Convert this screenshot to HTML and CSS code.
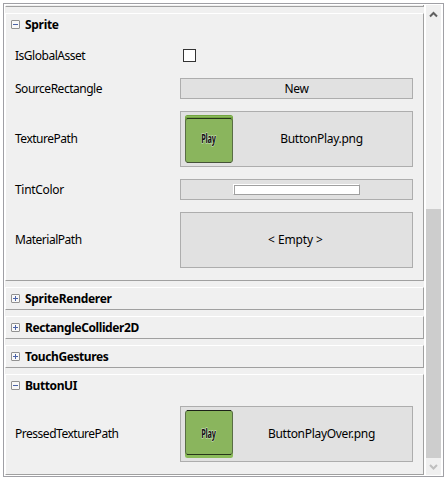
FILE: index.html
```html
<!DOCTYPE html>
<html lang="en">
<head>
<meta charset="utf-8">
<title>Inspector</title>
<link rel="stylesheet" href="styles.css">
</head>
<body>
<div class="frame">
  <main class="content">
    <div class="edge"></div>
    <section class="panel sprite">
      <header><i class="toggle"></i><b class="short">Sprite</b></header>
      <div class="row check-row"><label>IsGlobalAsset</label><span class="checkbox"></span></div>
      <div class="row"><label>SourceRectangle</label><div class="button">New</div></div>
      <div class="row tall"><label>TexturePath</label><div class="button picture">
        <svg width="48" height="48" viewBox="0 0 48 48"><rect width="48" height="46" rx="2.5" fill="#72a63f"/><path d="M1 1.5H47" stroke="#8db75f"/><rect x=".5" y="3.5" width="47" height="44" rx="2.5" fill="#8ab55d" stroke="#596d45"/><path d="M2 3.5H46" stroke="#27351a"/><path d="M2 47.5H46" stroke="#455238"/><text x="23.5" y="28.5">Play</text></svg>
        <span>ButtonPlay.png</span></div></div>
      <div class="row"><label class="loose">TintColor</label><div class="button"><span class="swatch"></span></div></div>
      <div class="row tall"><label>MaterialPath</label><div class="button empty">&lt; Empty &gt;</div></div>
    </section>
    <section class="panel"><header><i class="toggle plus"></i><b class="short">SpriteRenderer</b></header></section>
    <section class="panel"><header><i class="toggle plus"></i><b>RectangleCollider2D</b></header></section>
    <section class="panel"><header><i class="toggle plus"></i><b>TouchGestures</b></header></section>
    <section class="panel button-ui">
      <header><i class="toggle"></i><b>ButtonUI</b></header>
      <div class="row tall"><label>PressedTexturePath</label><div class="button picture">
        <svg width="48" height="48" viewBox="0 0 48 48"><rect y="2" width="48" height="46" rx="2.5" fill="#8abb59"/><rect x=".5" y=".5" width="47" height="44" rx="2.5" fill="#8ab55d" stroke="#596d45"/><path d="M2 .5H46" stroke="#1c2118"/><path d="M2 44.5H46" stroke="#27351a"/><text x="23.5" y="28.5">Play</text></svg>
        <span>ButtonPlayOver.png</span></div></div>
    </section>
  </main>
  <aside class="scrollbar">
    <svg width="15" height="17" viewBox="0 0 15 17"><path d="M4 11.5L7.5 8L11 11.5" fill="none" stroke="#606060" stroke-width="2"/></svg>
    <div class="thumb"></div>
    <svg width="15" height="17" viewBox="0 0 15 17"><path d="M4 7L7.5 10.5L11 7" fill="none" stroke="#bfbfbf" stroke-width="2"/></svg>
  </aside>
</div>
</body>
</html>
```
FILE: styles.css
```css
* { box-sizing: border-box; }
body {
  margin: 0;
  padding: 3px;
  background: #fff;
  font: 12px/16px "Noto Sans", "Open Sans", sans-serif;
  letter-spacing: -.3px;
  color: #000;
}
.frame {
  display: flex;
  width: 441px;
  height: 474px;
  padding: 1px;
  border: 1px solid #a0a0a5;
  background: #fff;
}
.content {
  display: flex;
  flex-direction: column;
  gap: 6px;
  width: 419px;
  height: 470px;
  background: #f0f0f0;
}
.edge, .panel {
  border: solid;
  border-width: 1px;
  border-color: #fff #a0a0a0 #a0a0a0 #fff;
}
.edge { height: 2px; border-top: 0; }
.panel { height: 23px; }
.panel.sprite { height: 268px; }
.panel.button-ui { height: 101px; }
header {
  display: flex;
  align-items: center;
  gap: 5px;
  height: 21px;
  padding-left: 5px;
}
b { letter-spacing: -.4px; font-weight: 700; }
b.short { letter-spacing: -.3px; }
.toggle {
  width: 9px;
  height: 9px;
  border: 1px solid #919191;
  border-radius: 1px;
  background: linear-gradient(#4b63a7, #4b63a7) center / 5px 1px no-repeat, #f8f8f8;
}
.toggle.plus {
  background: linear-gradient(#4b63a7, #4b63a7) center / 5px 1px no-repeat,
    linear-gradient(#4b63a7, #4b63a7) center / 1px 5px no-repeat, #f8f8f8;
}
.row {
  display: flex;
  align-items: center;
  height: 21px;
  margin-bottom: 12px;
  padding-left: 9px;
}
.row.check-row { margin-top: 10px; }
.row.tall { height: 56px; }
.button-ui .row { margin-top: 10px; }
label { width: 165px; letter-spacing: -.48px; }
label.loose { letter-spacing: -.3px; }
.checkbox {
  width: 13px;
  height: 13px;
  margin-left: 3px;
  border: 1px solid #333;
  background: #fff;
}
.button {
  display: flex;
  align-items: center;
  justify-content: center;
  width: 233px;
  height: 100%;
  border: 1px solid #adadad;
  background: #e1e1e1;
}
.empty { padding-right: 2px; letter-spacing: -.1px; }
.picture { justify-content: flex-start; padding-left: 4px; }
.picture span { flex: 1; padding-right: 2px; text-align: center; }
.picture text {
  font: 700 13px "Open Sans", sans-serif;
  letter-spacing: -.3px;
  text-anchor: middle;
  fill: #111;
  stroke: #dce5d2;
  stroke-width: 1.2px;
  paint-order: stroke;
  transform: scaleX(.56);
  transform-origin: 23.5px 0;
}
.swatch {
  width: 127px;
  height: 11px;
  border: 1px solid #fff;
  border-right-color: #a0a0a0;
  border-bottom-color: #a0a0a0;
  background: #fff;
  box-shadow: inset 1px 1px #a0a0a0;
}
.scrollbar {
  display: flex;
  flex-direction: column;
  justify-content: space-between;
  width: 15px;
  margin-left: 2px;
  background: #f0f0f0;
}
.scrollbar svg { display: block; }
.thumb { height: 249px; margin-top: auto; background: #cdcdcd; }
```
